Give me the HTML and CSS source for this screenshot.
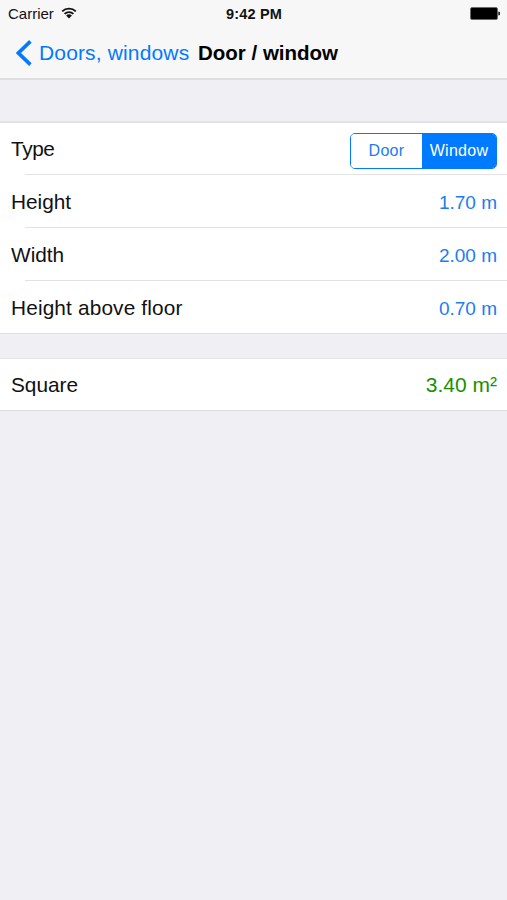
FILE: index.html
```html
<!DOCTYPE html>
<html lang="en">
<head>
    <meta charset="UTF-8">
    <meta name="viewport" content="width=device-width, initial-scale=1.0">
    <title>Door / window</title>
    <link rel="stylesheet" href="styles.css">
</head>
<body>
    <header class="header">
        <div class="status-bar">
            <div class="carrier">
                <span>Carrier</span>
                <svg class="wifi" width="16" height="12" viewBox="0 0 16 12">
                    <path d="M1.2 4.4a9.8 9.8 0 0 1 13.6 0M3.6 6.9a6.3 6.3 0 0 1 8.8 0" fill="none" stroke="#111" stroke-width="1.9"/>
                    <path d="M5.1 8.6a4.2 4.2 0 0 1 5.8 0L8 11.5z" fill="#111"/>
                </svg>
            </div>
            <span class="time">9:42 PM</span>
            <div class="battery">
                <svg width="30" height="13" viewBox="0 0 30 13">
                    <rect x="0.5" y="0.5" width="27" height="12" rx="1.5" fill="#000" stroke="#666" stroke-width="0.8"/>
                    <path d="M28.3 4.6a2 2 0 0 1 0 4z" fill="#222"/>
                </svg>
            </div>
        </div>
        <nav class="nav-bar">
            <a class="back" href="#">
                <svg width="16" height="26" viewBox="0 0 16 26">
                    <path d="M14.4 1.4L2.4 13l12 11.6" fill="none" stroke="#007aff" stroke-width="3.6"/>
                </svg>
                <span>Doors, windows</span>
            </a>
            <h1 class="title">Door / window</h1>
        </nav>
    </header>
    <main>
        <div class="group">
            <div class="row">
                <span class="label type">Type</span>
                <div class="segmented">
                    <button class="segment">Door</button>
                    <button class="segment active">Window</button>
                </div>
            </div>
            <div class="row">
                <span class="label">Height</span>
                <span class="value">1.70 m</span>
            </div>
            <div class="row">
                <span class="label">Width</span>
                <span class="value">2.00 m</span>
            </div>
            <div class="row">
                <span class="label long">Height above floor</span>
                <span class="value">0.70 m</span>
            </div>
        </div>
        <div class="group">
            <div class="row">
                <span class="label">Square</span>
                <span class="total">3.40 m²</span>
            </div>
        </div>
    </main>
</body>
</html>
```
FILE: styles.css
```css
* {
    box-sizing: border-box;
}
body {
    margin: 0;
    min-height: 100vh;
    background: #efeff4;
    color: #111;
    font-family: "Liberation Sans", Arial, sans-serif;
}
.header {
    height: 80px;
    background: #f7f7f7;
    border-bottom: 2px solid #dedee1;
}
.status-bar {
    display: grid;
    grid-template-columns: 1fr auto 1fr;
    align-items: center;
    height: 27px;
    padding: 0 7px 0 8px;
    font-size: 15px;
}
.carrier {
    display: flex;
    align-items: center;
    gap: 7px;
}
.wifi {
    margin-top: -2px;
}
.time {
    font-size: 14.5px;
    font-weight: bold;
    letter-spacing: 0.2px;
}
.battery {
    display: flex;
    justify-content: flex-end;
}
.nav-bar {
    display: flex;
    align-items: center;
    height: 51px;
    padding-left: 16px;
    font-size: 21px;
}
.back {
    display: flex;
    align-items: center;
    gap: 7px;
    width: 182px;
    color: #007aff;
    text-decoration: none;
    white-space: nowrap;
    letter-spacing: 0.15px;
}
.title {
    margin: 0;
    color: #000;
    font-size: 20.5px;
    font-weight: bold;
}
.group {
    margin-top: 41px;
    background: #fff;
    border-top: 2px solid #e3e3e6;
    border-bottom: 1px solid #dedee1;
}
.group + .group {
    margin-top: 24px;
    border-top-width: 1px;
}
.row {
    display: flex;
    align-items: center;
    justify-content: space-between;
    height: 51px;
    padding: 0 10px 0 11px;
}
/* separator is inset from the left edge */
.row + .row {
    height: 53px;
    border-top: 1px solid;
    border-image: linear-gradient(to right, transparent 26px, #e2e2e4 26px) 1 / 1px 0 0 0;
}
.label {
    font-size: 20.8px;
}
.label.type {
    letter-spacing: -0.4px;
}
.label.long {
    letter-spacing: 0.15px;
}
.row + .row .label {
    margin-top: 1px;
}
.value {
    margin-top: 3px;
    color: #1a7df0;
    font-size: 19px;
}
.total {
    color: #199000;
    font-size: 21px;
}
.segmented {
    display: flex;
    width: 147px;
    height: 36px;
    margin-top: 4px;
    border: 1px solid #007aff;
    border-radius: 5px;
    overflow: hidden;
}
.segment {
    flex: 1;
    padding: 0;
    border: none;
    background: #fff;
    color: #1a7df0;
    font-family: inherit;
    font-size: 16px;
    letter-spacing: 0.3px;
}
.segment.active {
    flex: 0 0 74px;
    background: #007aff;
    color: #fff;
}
```
